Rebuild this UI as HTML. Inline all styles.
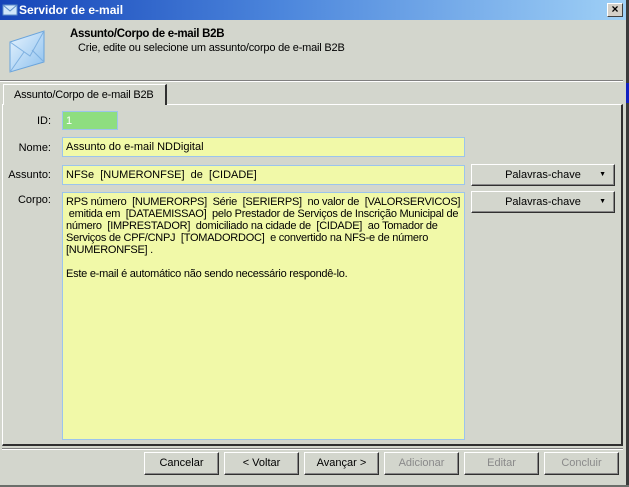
<!DOCTYPE html>
<html><head><style>
*{margin:0;padding:0;box-sizing:border-box}
body{width:629px;height:487px;background:#d3d6cd;font-family:"Liberation Sans",sans-serif;font-size:11px;color:#000;position:relative;overflow:hidden}
.a{position:absolute;white-space:nowrap}
.title{left:0;top:0;width:626px;height:20px;background:linear-gradient(90deg,#1544b8 0%,#4c86dc 45%,#9fd0f6 100%);color:#fff;font-weight:bold;font-size:12px;line-height:20px;padding-left:19px}
.close{left:607px;top:3px;width:16px;height:14px;background:#d4d0c8;border:1px solid;border-color:#fff #404040 #404040 #fff;font-size:12px;line-height:11px;text-align:center;color:#000;font-weight:bold}
.fld{border:1px solid #9cc4ec;background:#f1f9a8;padding:3px 3px;line-height:12px}
.btn{background:#d3d6cd;border:1px solid;border-color:#fff #303030 #303030 #fff;box-shadow:inset -1px -1px 0 #888;text-align:center;line-height:20px}
.dis{color:#8a8a8a}
.lbl{text-align:right;width:51px;left:0}
</style></head><body>
<div class="a title">Servidor de e-mail</div>
<svg class="a" style="left:2px;top:3px" width="16" height="14" viewBox="0 0 16 14"><rect x="1" y="2" width="14" height="10" fill="#cfe6fa" stroke="#5c8cc8"/><path d="M1 2L8 8L15 2" fill="none" stroke="#5c8cc8"/></svg>
<div class="a close">×</div>
<div class="a" style="left:626px;top:0;width:3px;height:487px;background:#3a3a3a"></div>
<div class="a" style="left:626px;top:83px;width:3px;height:20px;background:#1020c0"></div>
<svg class="a" style="left:8px;top:28px" width="38" height="46" viewBox="0 0 38 46"><defs><linearGradient id="g" x1="0" y1="0" x2="1" y2="1"><stop offset="0" stop-color="#e8f4fe"/><stop offset="1" stop-color="#8cc0ee"/></linearGradient></defs><path d="M2 14L36 3L36 34L2 44Z" fill="url(#g)" stroke="#6aa4dc"/><path d="M2 14L22 28L36 3M2 44L16 24M36 34L24 22" fill="none" stroke="#7eb0e0"/></svg>
<div class="a" style="left:70px;top:28px;font-weight:bold;font-size:11.5px;letter-spacing:-0.3px">Assunto/Corpo de e-mail B2B</div>
<div class="a" style="left:78px;top:42px;letter-spacing:-0.2px">Crie, edite ou selecione um assunto/corpo de e-mail B2B</div>
<div class="a" style="left:0;top:80px;width:623px;height:2px;border-top:1px solid #808080;border-bottom:1px solid #fff"></div>
<div class="a" style="left:2px;top:104px;width:621px;height:342px;border:1px solid;border-color:#fff #303030 #303030 #fff;border-width:1px 2px 2px 1px"></div>
<div class="a" style="left:3px;top:84px;width:164px;height:21px;background:#d3d6cd;border:1px solid;border-color:#fff #303030 transparent #fff;border-width:1px 2px 0 1px;padding:4px 0 0 10px;letter-spacing:-0.2px">Assunto/Corpo de e-mail B2B</div>
<div class="a lbl" style="top:115px">ID:</div>
<div class="a lbl" style="top:142px">Nome:</div>
<div class="a lbl" style="top:169px">Assunto:</div>
<div class="a lbl" style="top:194px">Corpo:</div>
<div class="a fld" style="left:62px;top:111px;width:56px;height:19px;background:#8ede80;color:#fff">1</div>
<div class="a fld" style="left:62px;top:137px;width:403px;height:20px">Assunto do e-mail NDDigital</div>
<div class="a fld" style="left:62px;top:165px;width:403px;height:20px">NFSe&nbsp; [NUMERONFSE]&nbsp; de&nbsp; [CIDADE]</div>
<div class="a fld" style="left:62px;top:192px;width:403px;height:248px;white-space:pre;letter-spacing:-0.25px;line-height:12px">RPS número  [NUMERORPS]  Série  [SERIERPS]  no valor de  [VALORSERVICOS]
 emitida em  [DATAEMISSAO]  pelo Prestador de Serviços de Inscrição Municipal de
número  [IMPRESTADOR]  domiciliado na cidade de  [CIDADE]  ao Tomador de
Serviços de CPF/CNPJ  [TOMADORDOC]  e convertido na NFS-e de número
[NUMERONFSE] .

Este e-mail é automático não sendo necessário respondê-lo.</div>
<div class="a btn" style="left:471px;top:164px;width:144px;height:22px">Palavras-chave<span style="position:absolute;right:8px;font-size:7px">▼</span></div>
<div class="a btn" style="left:471px;top:191px;width:144px;height:22px">Palavras-chave<span style="position:absolute;right:8px;font-size:7px">▼</span></div>
<div class="a" style="left:2px;top:448px;width:621px;height:2px;border-top:1px solid #808080;border-bottom:1px solid #fff"></div>
<div class="a btn" style="left:144px;top:452px;width:75px;height:23px">Cancelar</div>
<div class="a btn" style="left:224px;top:452px;width:75px;height:23px">&lt; Voltar</div>
<div class="a btn" style="left:304px;top:452px;width:75px;height:23px">Avançar &gt;</div>
<div class="a btn dis" style="left:384px;top:452px;width:75px;height:23px">Adicionar</div>
<div class="a btn dis" style="left:464px;top:452px;width:75px;height:23px">Editar</div>
<div class="a btn dis" style="left:544px;top:452px;width:75px;height:23px">Concluir</div>
<div class="a" style="left:0;top:485px;width:629px;height:2px;background:#6a6e6a"></div>
</body></html>
